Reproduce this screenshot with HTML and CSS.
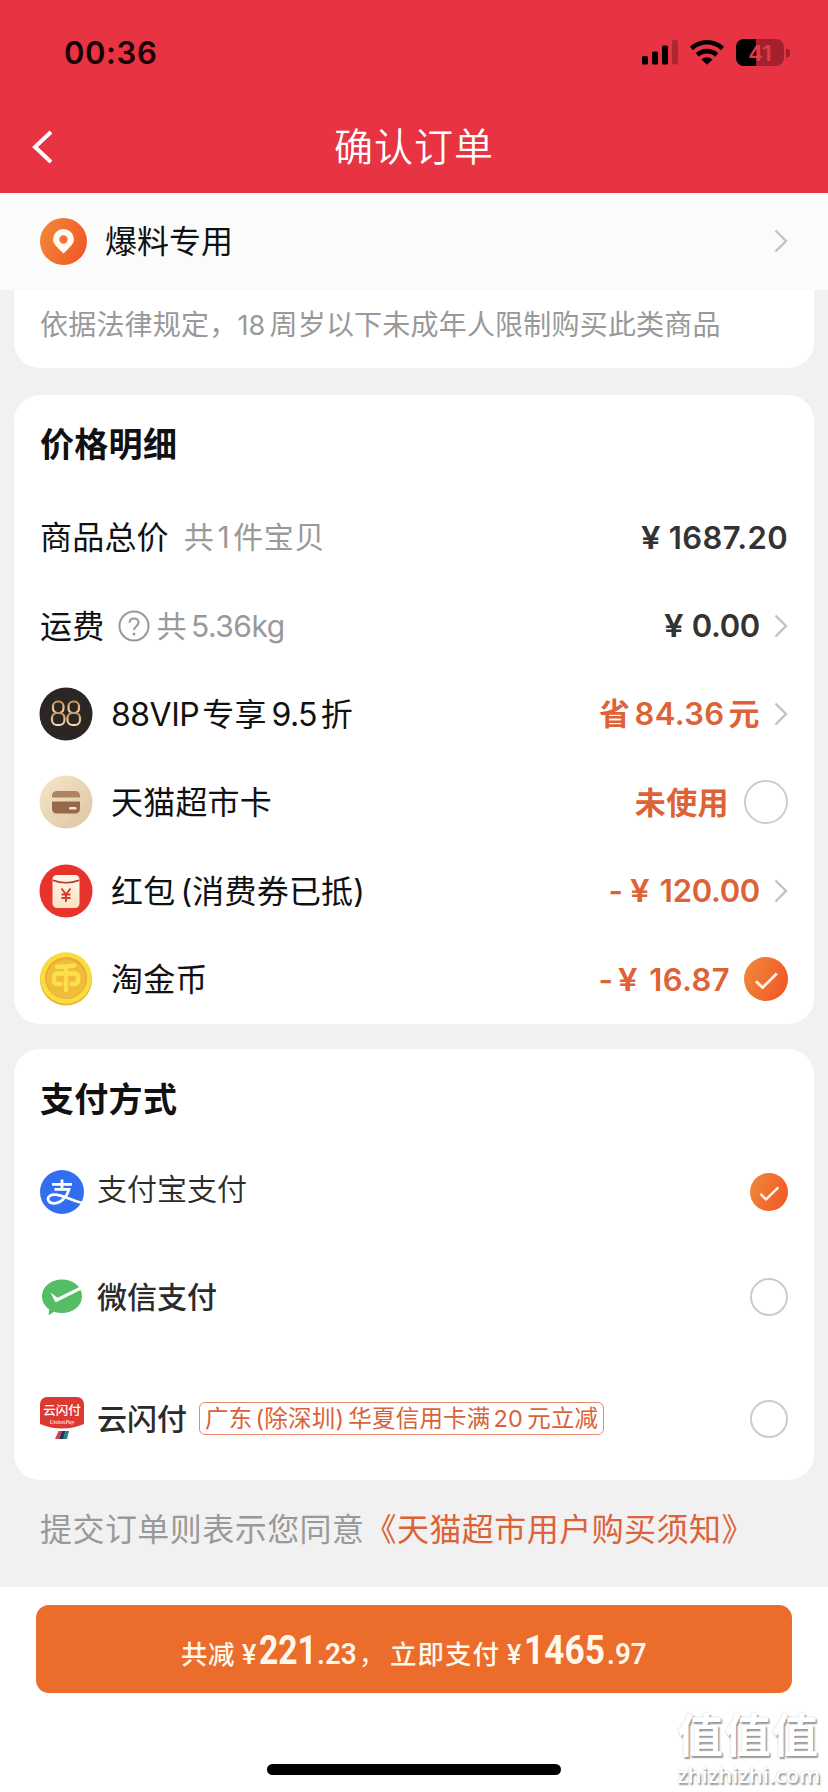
FILE: index.html
```html
<!DOCTYPE html>
<html lang="zh-CN">
<head>
<meta charset="utf-8">
<title>确认订单</title>
<link rel="stylesheet" href="styles.css">
</head>
<body>
<svg class="defs" width="0" height="0" aria-hidden="true">
  <defs>
    <linearGradient id="orange" x1="0" y1="0.2" x2="1" y2="0.6"><stop offset="0" stop-color="#f0883a"/><stop offset="1" stop-color="#f05a26"/></linearGradient>
    <linearGradient id="cream" x1="0" y1="0" x2="1" y2="1"><stop offset="0" stop-color="#f6e6cb"/><stop offset="1" stop-color="#dcc5a0"/></linearGradient>
    <linearGradient id="envelope" x1="0" y1="0" x2="0" y2="1"><stop offset="0" stop-color="#fff6ec"/><stop offset="1" stop-color="#fae3c0"/></linearGradient>
    <linearGradient id="gold" x1="0" y1="0" x2="0" y2="1"><stop offset="0" stop-color="#c9955c"/><stop offset="1" stop-color="#f5ddb0"/></linearGradient>
    <symbol id="chev" viewBox="0 0 14 24"><path d="M1.5 1.5 12 12 1.5 22.5" fill="none" stroke="#c2c2c4" stroke-width="2.4"/></symbol>
    <symbol id="checked" viewBox="0 0 44 44"><circle cx="22" cy="22" r="22" fill="url(#orange)"/><path d="M12 24.2 18.6 30.6 32.8 16.6" fill="none" stroke="#fff4e6" stroke-width="2.8"/></symbol>
  </defs>
</svg>
<div class="screen">
  <header class="top">
    <div class="status">
      <span class="time">00:36</span>
      <svg class="status-icons" width="150" height="28" viewBox="0 0 150 28">
        <rect x="2" y="17" width="6" height="8.500" rx="1.600"/><rect x="12" y="12.500" width="6" height="13" rx="1.600"/><rect x="22" y="6.500" width="6" height="19" rx="1.600"/>
        <rect x="32" y="1" width="6" height="24.500" rx="1.600" opacity=".25"/>
        <g fill="none" stroke="#000" stroke-width="4.600"><path d="M51.500 9.500a22.500 22.500 0 0 1 31 0"/><path d="M57.300 16a14 14 0 0 1 19.400 0"/></g>
        <path d="M61.500 20.500a8 8 0 0 1 11 0L67 25.800z"/>
        <rect x="96" y="0" width="48" height="27" rx="8" fill="#a3212f"/>
        <path d="M104 0h12v27h-12a8 8 0 0 1-8-8V8a8 8 0 0 1 8-8z"/>
        <path d="M146 9.500a4.500 4.500 0 0 1 0 9z" fill="#a3212f"/>
        <text class="battery" x="120" y="21.500">41</text>
      </svg>
    </div>
    <div class="nav">
      <svg class="back" width="22" height="34" viewBox="0 0 22 34"><path d="M20 2 4 17 20 32" fill="none" stroke="#fff" stroke-width="4"/></svg>
      <h1 class="title">确认订单</h1>
    </div>
  </header>

  <div class="address">
    <svg width="47" height="47" viewBox="0 0 47 47"><circle cx="23.500" cy="23.500" r="23.500" fill="url(#orange)"/><path d="M23.500 35.500C17 29 13 25.800 13 21.500a10.500 10.500 0 0 1 21 0c0 4.300-4 7.500-10.500 14z" fill="#fff9f2"/><circle cx="23.500" cy="21.500" r="4.200" fill="#f0783a"/></svg>
    <span class="address-name">爆料专用</span>
    <svg class="chev" width="14" height="24"><use href="#chev"/></svg>
  </div>

  <section class="card notice">依据法律规定，<span class="num">18</span>周岁以下未成年人限制购买此类商品</section>

  <section class="card prices">
    <h2 class="card-title">价格明细</h2>
    <div class="row">
      <span class="label">商品总价</span><span class="hint total-hint">共<span class="one">1</span>件宝贝</span>
      <span class="value dark"><span class="yen">¥</span>1687.20</span>
    </div>
    <div class="row">
      <span class="label">运费</span>
      <svg class="help" width="32" height="32" viewBox="0 0 32 32" fill="none" stroke="#999" stroke-width="2"><circle cx="16" cy="16" r="14.500"/><path d="M11.500 12.800c0-2.800 2-4.400 4.600-4.400s4.500 1.700 4.500 4.100c0 3.500-4.500 3.800-4.500 7.500"/><circle cx="16" cy="24" r="1.500" fill="#999" stroke="none"/></svg>
      <span class="hint weight">共<span class="kg">5.36kg</span></span>
      <span class="value dark tight"><span class="yen wide">¥</span>0.00</span>
      <svg class="chev" width="14" height="24"><use href="#chev"/></svg>
    </div>
    <div class="row">
      <svg class="badge" width="54" height="54" viewBox="0 0 54 54"><circle cx="27" cy="27" r="26.500" fill="#2b2524"/><g fill="none" stroke="url(#gold)" stroke-width="2.200"><rect x="14" y="14.500" width="10.500" height="11.500" rx="4.800"/><rect x="13" y="26" width="12.500" height="12" rx="5"/><rect x="29.500" y="14.500" width="10.500" height="11.500" rx="4.800"/><rect x="28.500" y="26" width="12.500" height="12" rx="5"/></g></svg>
      <span class="label with-badge"><span class="vip">88VIP</span>专享<span class="rate">9.5</span>折</span>
      <span class="value"><span class="save">省</span>84.36<span class="yuan">元</span></span>
      <svg class="chev" width="14" height="24"><use href="#chev"/></svg>
    </div>
    <div class="row">
      <svg class="badge" width="54" height="54" viewBox="0 0 54 54"><circle cx="27" cy="27" r="26.500" fill="url(#cream)"/><path d="M13 22.500v-2a4.500 4.500 0 0 1 4.500-4.500h19a4.500 4.500 0 0 1 4.500 4.500v2z" fill="#ad8460"/><path d="M13 26.500h28v7.500a4.500 4.500 0 0 1-4.500 4.500h-19a4.500 4.500 0 0 1-4.500-4.500z" fill="#95694a"/><rect x="30" y="32" width="7.500" height="2.600" rx="1.200" fill="#f6e6cb"/></svg>
      <span class="label with-badge">天猫超市卡</span>
      <span class="value unused">未使用</span>
      <span class="radio"></span>
    </div>
    <div class="row">
      <svg class="badge" width="54" height="54" viewBox="0 0 54 54"><circle cx="27" cy="27" r="26.500" fill="#e8332c"/><rect x="13.500" y="11" width="27" height="33" rx="4.500" fill="url(#envelope)"/><path d="M13.800 16.200q13.200 5 26.400 0" fill="none" stroke="#b9322b" stroke-width="1.500"/><path d="M22.500 24.500 27 30.500 31.500 24.500M27 30.500v7.500M22.500 30.500h9M22.500 34h9" fill="none" stroke="#d23a30" stroke-width="1.900"/></svg>
      <span class="label with-badge">红包<span class="paren">(</span>消费券已抵<span class="paren-end">)</span></span>
      <span class="value tight"><span class="minus a">-</span><span class="yen wider">¥</span>120.00</span>
      <svg class="chev" width="14" height="24"><use href="#chev"/></svg>
    </div>
    <div class="row">
      <svg class="badge" width="54" height="54" viewBox="0 0 54 54"><circle cx="27" cy="27.500" r="26" fill="#e6b32c"/><circle cx="27" cy="26" r="25.800" fill="#f9dc3f"/><circle cx="27" cy="26" r="21" fill="#e9ac34"/><circle cx="27" cy="27" r="19.500" fill="#f0bd3a"/><path d="M18 14.800q9.500 0 17.500-1.300M27 14.500V38M21.500 32H19q-4 0-4-3.500V25q0-3.500 4-3.500h16q4 0 4 3.500v3.500q0 3.500-4 3.500h-2.500" fill="none" stroke="#fbe04a" stroke-width="4.400" stroke-linecap="round"/></svg>
      <span class="label with-badge">淘金币</span>
      <span class="value coin"><span class="minus b">-</span><span class="yen wider">¥</span>16.87</span>
      <svg class="check big" width="44" height="44"><use href="#checked"/></svg>
    </div>
  </section>

  <section class="card pay">
    <h2 class="card-title">支付方式</h2>
    <div class="row alipay">
      <svg width="44" height="44" viewBox="0 0 44 44"><circle cx="22" cy="22" r="22" fill="#316ff0"/><path d="M22 9.500V19M12 14.300h20M14.500 19.300h14.500c-2 7.500-8 14-14.500 14-4.500 0-6.500-2-6.500-4.200 0-2.800 2.700-4.500 6.500-4.500 8 0 15 5 27.500 8.400" fill="none" stroke="#fff" stroke-width="2.800"/></svg>
      <span class="method plain">支付宝支付</span>
      <svg class="check" width="38" height="38"><use href="#checked"/></svg>
    </div>
    <div class="row wechat">
      <svg width="44" height="44" viewBox="0 0 44 44"><path d="M22 4.500c11 0 20 7.200 20 16.800S33 38 22 38c-2.800 0-5.500-.4-8-1.200L8.500 40.200l.8-5.800C4.800 31.400 2 26.700 2 21.300 2 11.700 11 4.500 22 4.500z" fill="#55bd66"/><path d="m10.500 17.500 7 5.300L42 10.800v3.400L17 26.800q-1.800.8-2.600-1.200z" fill="#fff"/></svg>
      <span class="method">微信支付</span>
      <span class="radio small"></span>
    </div>
    <div class="row union">
      <svg width="44" height="44" viewBox="0 0 44 44"><path d="M7 0h30a7 7 0 0 1 7 7v20q-22 9-44 0V7a7 7 0 0 1 7-7z" fill="#dc3933"/><text class="up-cn" x="22" y="18">云闪付</text><text class="up-en" x="22" y="26.500">UnionPay</text><path d="M18.500 34h4l-2.500 8h-5z" fill="#c8485c"/><path d="M22 34h3.500l-2 8h-4z" fill="#21355e"/><path d="M25 34h4l-2 8h-4z" fill="#2e8080"/></svg>
      <span class="method">云闪付</span>
      <span class="promo">广东<span class="p1">(</span>除深圳<span class="p2">)</span>华夏信用卡满<span class="p3">20</span>元立减</span>
      <span class="radio small"></span>
    </div>
  </section>

  <p class="agreement">提交订单则表示您同意<span class="link">《天猫超市用户购买须知》</span></p>

  <footer class="bottom">
    <div class="submit">
      <span class="cn">共减</span><span class="cur">¥</span><span class="fig w221"><span>221</span></span><span class="dec"><span>.23</span></span><span class="comma">，</span><span class="cn now">立即支付</span><span class="cur">¥</span><span class="fig w1465"><span>1465</span></span><span class="dec"><span>.97</span></span>
    </div>
    <div class="home"></div>
  </footer>
  <div class="watermark"><span class="wm-cn">值值值</span><span class="wm-en">zhizhizhi.com</span></div>
</div>
</body>
</html>
```
FILE: styles.css
```css
* { box-sizing: border-box; }
body { margin: 0; background: #f1f1f1; font-family: Inter, "Noto Sans CJK SC", sans-serif; color: #111; }
h1, h2, p { margin: 0; font-weight: 400; }
svg { display: block; flex: none; }
.defs { position: absolute; }
.screen { position: relative; width: 828px; height: 1792px; overflow: hidden; display: flex; flex-direction: column; background: #f1f1f1; white-space: nowrap; }

.top { height: 193px; background: #e73342; flex: none; }
.status { height: 106px; display: flex; justify-content: space-between; padding: 0 38px 0 64px; align-items: center; }
.time { font-size: 31px; font-weight: 600; color: #180004; letter-spacing: .6px; line-height: 40px; padding-bottom: 1px; }
.battery { font: 600 22px Inter, sans-serif; fill: #e23c4b; text-anchor: middle; }
.nav { height: 82px; display: grid; grid-template-columns: 200px 1fr 200px; align-items: center; }
.back { margin-left: 31px; }
.title { text-align: center; color: #fff; font-size: 39px; font-weight: 350; letter-spacing: 1px; line-height: 60px; }

.address { height: 97px; flex: none; background: #fbfbfc; display: flex; align-items: center; padding: 0 40px 1px; }
.address-name { margin-left: 18px; font-size: 32px; line-height: 44px; padding-top: 2px; }
.chev { margin-left: auto; }

.card { margin: 0 14px; background: #fff; border-radius: 26px; flex: none; padding: 0 26px; }
.notice { height: 78px; border-radius: 0 0 26px 26px; color: #999; font-size: 28px; line-height: 70px; letter-spacing: .2px; }
.notice .num { margin: 0 4px 0 0; font-size: 27px; }
.prices { margin-top: 27px; height: 629px; }
.card-title { height: 98px; line-height: 100px; font-size: 34px; font-weight: 700; letter-spacing: .3px; }
.row { display: flex; align-items: center; height: 88.4px; }
.label { font-size: 32px; letter-spacing: .2px; line-height: 44px; padding-top: 2px; }
.with-badge { margin-left: 18px; }
.badge { margin-left: -1px; }
.hint { font-size: 30px; color: #999; letter-spacing: .6px; line-height: 44px; }
.total-hint { margin-left: 15px; }
.one { margin: 0 3px; }
.help { margin-left: 14px; }
.weight { margin-left: 6px; }
.kg { margin-left: 4px; letter-spacing: -.5px; }
.vip { letter-spacing: -.5px; margin-right: 3px; }
.rate { margin: 0 4px 0 5px; letter-spacing: -.7px; }
.paren { margin: 0 0 0 5px; }
.value { margin-left: auto; font-size: 31px; font-weight: 600; color: #dd6236; letter-spacing: .4px; line-height: 44px; padding-top: 1px; }
.value.dark { color: #333; }
.value + .chev { margin-left: 14px; }
.tight { letter-spacing: -.3px; }
.yen { display: inline-block; transform: scaleX(1.12); margin-right: 9px; }
.wide { margin-right: 10px; }
.wider { margin-right: 12px; }
.save { margin-right: 4px; }
.yuan { margin-left: 4px; }
.minus.a { margin-right: 8px; }
.minus.b { margin-right: 6px; }
.radio { width: 44px; height: 44px; border: 2px solid #ccc; border-radius: 50%; margin-left: 15px; flex: none; }
.radio.small { width: 38px; height: 38px; margin-left: auto; }
.check { margin-left: auto; }
.check.big { margin-left: 14px; }

.pay { margin-top: 25px; height: 431px; }
.pay .card-title { height: 100px; line-height: 102px; }
.alipay { height: 86px; }
.wechat { height: 124px; }
.union { height: 119px; }
.method { margin-left: 13px; font-size: 30px; font-weight: 500; color: #2b2b2b; line-height: 44px; }
.method.plain { font-weight: 350; padding-bottom: 7px; }
.promo { margin-left: 12px; height: 33px; line-height: 31px; border: 1.5px solid #e58a6c; border-radius: 6px; padding: 0 5px; font-size: 23.5px; color: #d9623a; letter-spacing: .22px; }
.p1 { margin-left: 3px; }
.p2 { margin-right: 4px; }
.p3 { margin: 0 4px 0 3px; }
.up-cn { font: 500 12.5px "Noto Sans CJK SC", sans-serif; fill: #fff; text-anchor: middle; }
.up-en { font: italic 700 6px "Liberation Serif", serif; fill: #fbd5cf; text-anchor: middle; }

.agreement { height: 107px; flex: none; padding-left: 40px; font-size: 32px; letter-spacing: .45px; line-height: 100px; color: #999; }
.link { color: #dc6238; }

.bottom { height: 205px; flex: none; background: #fff; display: flex; flex-direction: column; align-items: center; padding-top: 18px; }
.submit { width: 756px; height: 88px; border-radius: 13px; background: #ec6c2b; color: #fff8ec; display: flex; align-items: baseline; padding-left: 145px; line-height: 90px; }
.cn { font-size: 26.5px; font-weight: 500; letter-spacing: .5px; }
.now { letter-spacing: 1px; }
.cur { font: 500 27px/90px Roboto, sans-serif; margin-left: 7px; width: 17px; }
.fig, .dec { font-family: Roboto, sans-serif; display: block; }
.fig span, .dec span { display: inline-block; transform-origin: 0 50%; }
.fig { font-size: 41px; font-weight: 700; }
.fig span { transform: scaleX(.82); }
.w221 { width: 58px; }
.w1465 { width: 83px; }
.w1465 span { transform: scaleX(.86); }
.dec { font-size: 29px; font-weight: 600; width: 41px; }
.dec span { transform: scaleX(.96); }
.comma { width: 32px; font-size: 26px; padding-left: 1px; }
.home { width: 294px; height: 11px; border-radius: 6px; background: #000; margin-top: 71px; }

.watermark { position: absolute; left: 677px; top: 1708px; width: 148px; height: 82px; display: flex; flex-direction: column; color: #fff; text-shadow: 1.5px 1.5px 1.5px #999, 0 0 2px #ccc; }
.wm-cn { font: 700 46px/56px Roboto, "Noto Sans CJK SC", sans-serif; letter-spacing: 1.5px; }
.wm-en { font: 600 22px/20px "Open Sans", sans-serif; }
```
